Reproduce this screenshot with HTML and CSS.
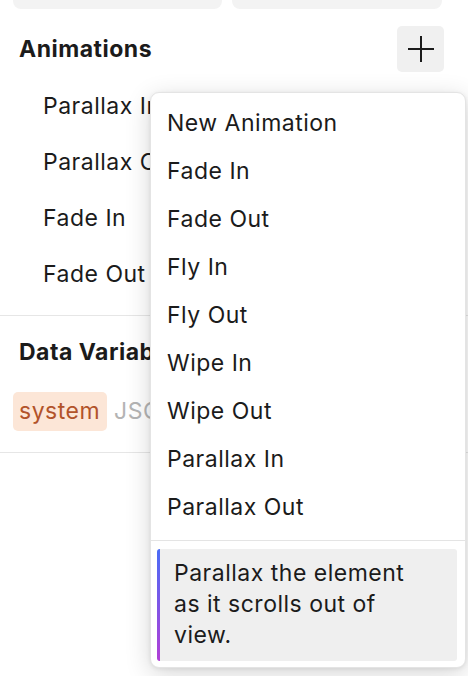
FILE: index.html
```html
<!DOCTYPE html>
<html>
<head>
<meta charset="utf-8">
<link rel="stylesheet" href="styles.css">
</head>
<body>
<div class="panel">
  <div class="top-row">
    <div class="top-card"></div>
    <div class="top-card"></div>
  </div>

  <section class="section anim">
    <div class="section-head">
      <h2 class="section-title">Animations</h2>
      <button class="add-btn" aria-label="Add animation">
        <svg width="28" height="28" viewBox="0 0 28 28"><path d="M14 1v26M1 14h26" stroke="#1b1b1b" stroke-width="2" fill="none"/></svg>
      </button>
    </div>
    <ul class="anim-list">
      <li>Parallax In</li>
      <li>Parallax Out</li>
      <li>Fade In</li>
      <li>Fade Out</li>
    </ul>
  </section>

  <section class="section vars">
    <h2 class="section-title">Data Variables</h2>
    <div class="tags">
      <span class="tag tag-system">system</span>
      <span class="tag tag-json">JSON</span>
    </div>
  </section>

  <div class="menu">
    <ul class="menu-list">
      <li>New Animation</li>
      <li>Fade In</li>
      <li>Fade Out</li>
      <li>Fly In</li>
      <li>Fly Out</li>
      <li>Wipe In</li>
      <li>Wipe Out</li>
      <li>Parallax In</li>
      <li>Parallax Out</li>
    </ul>
    <div class="menu-sep"></div>
    <div class="menu-desc">Parallax the element as it scrolls out of view.</div>
  </div>
</div>
</body>
</html>
```

FILE: styles.css
```css
* { box-sizing: border-box; }
html, body {
  margin: 0;
  padding: 0;
  background: #ffffff;
}
body {
  font-family: Inter, "Noto Sans", sans-serif;
  color: #1b1b1b;
  width: 468px;
  height: 676px;
  overflow: hidden;
  letter-spacing: 0.5px;
}
.panel {
  position: relative;
  width: 468px;
  height: 676px;
}
.top-row {
  display: grid;
  grid-template-columns: 209px 210px;
  gap: 10px;
  padding-left: 13px;
}
.top-card {
  height: 9px;
  background: #f3f3f3;
  border-radius: 0 0 8px 8px;
}
.section {
  border-bottom: 1px solid #e6e6e6;
}
.anim {
  padding: 17px 25px 13px 19px;
}
.section-head {
  display: flex;
  align-items: center;
  justify-content: space-between;
  height: 46px;
}
.section-title {
  margin: 0;
  font-size: 23px;
  font-weight: 700;
  line-height: 28px;
  color: #1b1b1b;
  white-space: nowrap;
}
.add-btn {
  width: 47px;
  height: 46px;
  border: none;
  border-radius: 5px;
  background: #f0f0f0;
  display: flex;
  align-items: center;
  justify-content: center;
  padding: 0;
  margin-right: -1px;
}
.anim-list {
  list-style: none;
  margin: 6px 0 0;
  padding: 0 0 0 24px;
}
.anim-list li {
  height: 56px;
  line-height: 56px;
  font-size: 23px;
  white-space: nowrap;
}
.vars {
  padding: 22px 0 21px 19px;
}
.tags {
  display: flex;
  align-items: center;
  gap: 7px;
  margin-top: 26px;
  margin-left: -6px;
}
.tag {
  font-size: 23px;
  line-height: 39px;
  height: 39px;
  white-space: nowrap;
}
.tag-system {
  background: #fce6d7;
  color: #b2532a;
  border-radius: 5px;
  padding: 0 7px 0 6px;
}
.tag-json {
  color: #b4b4b4;
}
.menu {
  position: absolute;
  left: 150px;
  top: 92px;
  width: 316px;
  height: 576px;
  background: #ffffff;
  border: 1px solid #e4e4e4;
  border-radius: 9px;
  box-shadow: 0 6px 26px rgba(0, 0, 0, 0.16), 0 1px 4px rgba(0, 0, 0, 0.08);
  padding: 6px 8px 6px 6px;
  display: flex;
  flex-direction: column;
}
.menu-list {
  list-style: none;
  margin: 0;
  padding: 0;
}
.menu-list li {
  height: 48px;
  line-height: 48px;
  font-size: 23px;
  padding-left: 10px;
  color: #1b1b1b;
}
.menu-sep {
  height: 1px;
  background: #e4e4e4;
  margin: 9px -8px 8px -6px;
}
.menu-desc {
  position: relative;
  background: #efefef;
  border-radius: 3px;
  padding: 9px 38px 10px 17px;
  font-size: 23px;
  line-height: 31px;
  color: #1b1b1b;
  overflow: hidden;
}
.menu-desc::before {
  content: "";
  position: absolute;
  left: 0;
  top: 0;
  bottom: 0;
  width: 3px;
  background: linear-gradient(to bottom, #4a6cf6, #b13fd6);
}
```
